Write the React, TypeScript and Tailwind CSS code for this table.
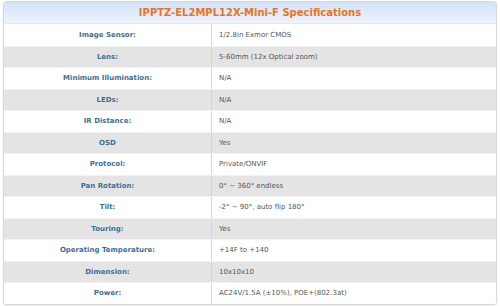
import React from "react";

const rows: [string, string][] = [
  ["Image Sensor:", "1/2.8in Exmor CMOS"],
  ["Lens:", "5-60mm (12x Optical zoom)"],
  ["Minimum Illumination:", "N/A"],
  ["LEDs:", "N/A"],
  ["IR Distance:", "N/A"],
  ["OSD", "Yes"],
  ["Protocol:", "Private/ONVIF"],
  ["Pan Rotation:", "0° ~ 360° endless"],
  ["Tilt:", "-2° ~ 90°, auto flip 180°"],
  ["Touring:", "Yes"],
  ["Operating Temperature:", "+14F to +140"],
  ["Dimension:", "10x10x10"],
  ["Power:", "AC24V/1.5A (±10%), POE+(802.3at)"],
];

export default function App() {
  return (
    <div className="w-[500px] h-[306px] bg-white pt-[1px] pl-[3px]" style={{ fontFamily: '"DejaVu Sans", Verdana, sans-serif' }}>
      <div className="w-[494px] border border-[#d8d8d8] rounded-[3px] overflow-hidden shadow-[0_1px_2px_rgba(0,0,0,0.08)]">
        <div className="h-[22px] flex items-center justify-center bg-gradient-to-b from-[#d3e2f7] to-[#edf3fc] border-b border-[#e4e9f0]">
          <span className="text-[10px] font-bold text-[#ec7420]">IPPTZ-EL2MPL12X-Mini-F Specifications</span>
        </div>
        {rows.map(([k, v], i) => (
          <div key={k} className={`flex h-[21.5px] ${i % 2 === 0 ? "bg-white" : "bg-[#e4e4e4]"} ${i > 0 ? "border-t border-[#f2f2f2]" : ""}`}>
            <div className="w-[208px] flex items-center justify-center border-r border-[#d6d6d6]">
              <span className="text-[7px] font-bold text-[#3f6f97]">{k}</span>
            </div>
            <div className="flex-1 flex items-center pl-[7px]">
              <span className="text-[7px] text-[#555555]">{v}</span>
            </div>
          </div>
        ))}
      </div>
    </div>
  );
}
